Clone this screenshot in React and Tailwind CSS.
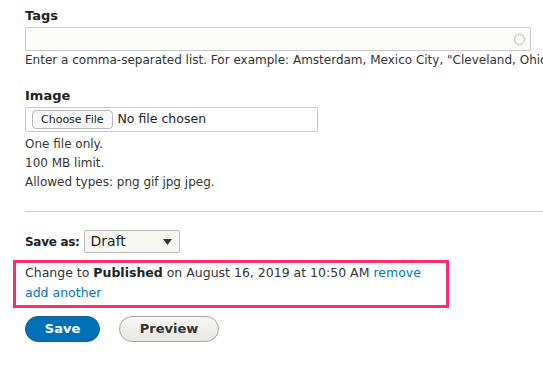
export default function App() {
  return (
    <div className="w-[543px] h-[366px] overflow-hidden bg-white text-[#333] font-['DejaVu_Sans',sans-serif]">
      <div className="pl-[25px] pt-[8px]">
        {/* Tags */}
        <label className="block text-[13px] font-bold leading-[16px] text-[#222]">Tags</label>
        <div className="mt-[3px] w-[506px] h-[24px] border border-[#c8c8c8] rounded-[2px] bg-[#fcfcfa] flex items-center justify-end pr-[5px]">
          <span className="w-[11px] h-[11px] rounded-full border-[1.5px] border-[#b5b5b5]" />
        </div>
        <p className="mt-[1px] text-[12px] leading-[16px] whitespace-nowrap">
          Enter a comma-separated list. For example: Amsterdam, Mexico City, "Cleveland, Ohio"
        </p>

        {/* Image */}
        <label className="mt-[20px] block text-[13px] font-bold leading-[16px] text-[#222]">Image</label>
        <div className="mt-[3px] w-[293px] h-[25px] border border-[#c8c8c8] rounded-[2px] bg-white flex items-center pl-[6px] gap-[5px]">
          <span className="h-[19px] px-[8px] border border-[#b8b8b8] rounded-[4px] bg-[#f8f8f8] text-[11px] leading-[17px] text-[#222]">
            Choose File
          </span>
          <span className="text-[12.5px] text-[#222]">No file chosen</span>
        </div>
        <div className="mt-[3px] text-[12px] leading-[19px]">
          <div>One file only.</div>
          <div>100 MB limit.</div>
          <div>Allowed types: png gif jpg jpeg.</div>
        </div>

        <div className="mt-[19px] h-px bg-[#c8c8c8]" />

        {/* Save as */}
        <div className="mt-[18px] flex items-center gap-[4px]">
          <span className="text-[12px] font-bold tracking-[-0.3px] text-[#222]">Save as:</span>
          <div className="w-[96px] h-[23px] border border-[#b8b8b8] rounded-[2px] bg-[#f6f6f3] flex items-center justify-between pl-[6px] pr-[7px]">
            <span className="text-[14px] text-[#222]">Draft</span>
            <svg width="9" height="6" viewBox="0 0 9 6">
              <path d="M0 0h9L4.5 6z" fill="#333" />
            </svg>
          </div>
        </div>
      </div>

      {/* Scheduled transition */}
      <div className="ml-[13px] mt-[7px] w-[436px] border-[3px] border-[#ff2d6e] pl-[9px] pb-[2px]">
        <div className="text-[12.5px] leading-[20px] text-[#333]">
          Change to <b className="text-[#222]">Published</b> on August 16, 2019 at 10:50 AM{" "}
          <a className="text-[#0074bd]">remove</a>
        </div>
        <div className="text-[12.5px] leading-[20px]">
          <a className="text-[#0074bd]">add another</a>
        </div>
      </div>

      <div className="pl-[25px] mt-[8px] flex gap-[19px]">
        <button className="w-[75px] h-[26px] rounded-full bg-[#0071b8] border border-[#1e5c90] text-white text-[13px] font-bold">
          Save
        </button>
        <button className="w-[100px] h-[26px] rounded-full bg-gradient-to-b from-[#f8f8f6] to-[#e6e6e2] border border-[#a6a6a6] text-[#333] text-[13px] font-bold">
          Preview
        </button>
      </div>
    </div>
  );
}
